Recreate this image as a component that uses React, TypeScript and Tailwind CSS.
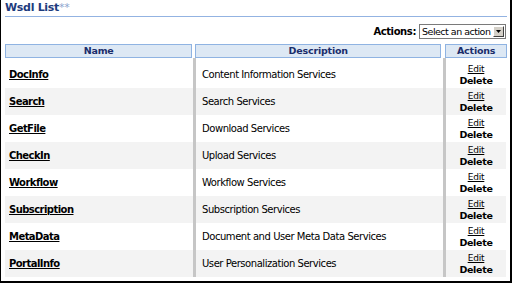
import React from "react";

const rows = [
  ["DocInfo", "Content Information Services"],
  ["Search", "Search Services"],
  ["GetFile", "Download Services"],
  ["CheckIn", "Upload Services"],
  ["Workflow", "Workflow Services"],
  ["Subscription", "Subscription Services"],
  ["MetaData", "Document and User Meta Data Services"],
  ["PortalInfo", "User Personalization Services"],
];

export default function App() {
  return (
    <div
      className="w-[512px] h-[283px] bg-white border-l border-r-2 border-b-2 border-black overflow-hidden text-black"
      style={{ fontFamily: '"DejaVu Sans", Verdana, sans-serif' }}
    >
      <div className="pl-[4px] pr-[3px]">
        <div className="h-[17px] border-b border-[#93b3e2] flex items-end pb-[1px]">
          <span className="text-[11px] font-bold text-[#1d3b7d] leading-[14px] tracking-[-0.3px]">
            Wsdl List<span className="text-[#8ea6cf] font-normal">**</span>
          </span>
        </div>
        <div className="h-[27px] flex items-center justify-end pr-[1px] pt-[2px]">
          <span className="text-[10px] font-bold tracking-[-0.4px] mr-[3px]">Actions:</span>
          <div className="w-[87px] h-[15px] border border-[#7a7a7a] bg-white flex items-center">
            <span className="flex-1 text-[9.5px] pl-[2px] leading-[13px] tracking-[-0.5px] whitespace-nowrap overflow-hidden">
              Select an action
            </span>
            <span className="w-[11px] h-[11px] mr-[1px] bg-[#d4d0c8] border border-t-white border-l-white border-r-[#404040] border-b-[#404040] flex items-center justify-center">
              <svg width="5" height="3" viewBox="0 0 5 3"><path d="M0 0h5L2.5 3z" fill="#000" /></svg>
            </span>
          </div>
        </div>
        <div className="flex h-[14px]">
          <div className="w-[188px] bg-[#dde8f4] border border-[#8fb3e2] flex items-center justify-center text-[9.5px] font-bold text-[#1b2d6b] tracking-[-0.2px]">
            Name
          </div>
          <div className="w-[3px]" />
          <div className="w-[247px] bg-[#dde8f4] border border-[#8fb3e2] flex items-center justify-center text-[9.5px] font-bold text-[#1b2d6b] tracking-[-0.2px]">
            Description
          </div>
          <div className="w-[4px]" />
          <div className="w-[62px] bg-[#dde8f4] border border-[#8fb3e2] flex items-center justify-center text-[9.5px] font-bold text-[#1b2d6b] tracking-[-0.2px]">
            Actions
          </div>
        </div>
        <div className="flex flex-col">
          <div className="flex h-[3px]">
            <div className="w-[188px]" />
            <div className="w-[3px] bg-[#c6c6c6]" />
            <div className="w-[247px]" />
            <div className="w-[3px] bg-[#c6c6c6]" />
          </div>
          {rows.map(([name, desc], i) => (
            <div key={name} className="flex h-[27px]">
              <div className={`w-[188px] flex items-center pl-[4px] ${i % 2 ? "bg-[#f3f3f3]" : ""}`}>
                <span className="text-[10px] font-bold underline tracking-[-0.55px]">{name}</span>
              </div>
              <div className="w-[3px] bg-[#c6c6c6]" />
              <div className={`w-[247px] flex items-center pl-[6px] ${i % 2 ? "bg-[#f3f3f3]" : ""}`}>
                <span className="text-[10px] tracking-[-0.45px]">{desc}</span>
              </div>
              <div className="w-[3px] bg-[#c6c6c6]" />
              <div className={`w-[60px] flex flex-col items-center justify-center ${i % 2 ? "bg-[#f3f3f3]" : ""}`}>
                <span className="text-[9px] underline leading-[12px] tracking-[-0.2px]">Edit</span>
                <span className="text-[9.5px] font-bold leading-[12px] tracking-[-0.3px]">Delete</span>
              </div>
            </div>
          ))}
        </div>
      </div>
    </div>
  );
}
